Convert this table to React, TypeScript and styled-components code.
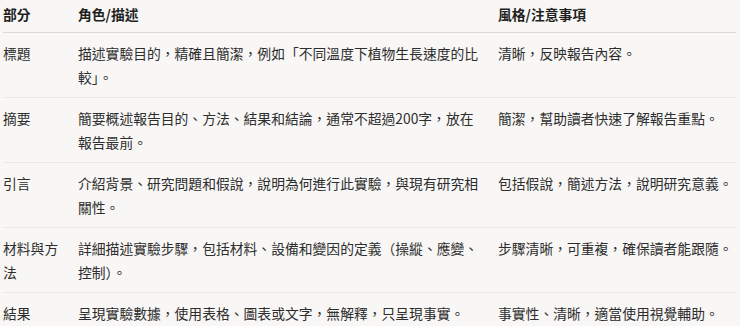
import React from "react";
import styled, { createGlobalStyle } from "styled-components";

const rows = [
  {
    part: "標題",
    role: "描述實驗目的，精確且簡潔，例如「不同溫度下植物生長速度的比較」。",
    note: "清晰，反映報告內容。",
  },
  {
    part: "摘要",
    role: "簡要概述報告目的、方法、結果和結論，通常不超過200字，放在報告最前。",
    note: "簡潔，幫助讀者快速了解報告重點。",
  },
  {
    part: "引言",
    role: "介紹背景、研究問題和假說，說明為何進行此實驗，與現有研究相關性。",
    note: "包括假說，簡述方法，說明研究意義。",
  },
  {
    part: "材料與方法",
    role: "詳細描述實驗步驟，包括材料、設備和變因的定義（操縱、應變、控制）。",
    note: "步驟清晰，可重複，確保讀者能跟隨。",
  },
  {
    part: "結果",
    role: "呈現實驗數據，使用表格、圖表或文字，無解釋，只呈現事實。",
    note: "事實性、清晰，適當使用視覺輔助。",
  },
];

const App: React.FC = () => {
  return (
    <Page lang="zh-Hant-TW">
      <GlobalStyle />
      <Table>
        <colgroup>
          <Col $w={67} />
          <Col $w={420} />
          <Col $w={246} />
        </colgroup>
        <thead>
          <tr>
            <Th>部分</Th>
            <Th>角色/描述</Th>
            <Th>風格/注意事項</Th>
          </tr>
        </thead>
        <tbody>
          {rows.map((r) => (
            <Row key={r.part}>
              <Td>{r.part}</Td>
              <Td>{r.role}</Td>
              <Td>{r.note}</Td>
            </Row>
          ))}
        </tbody>
      </Table>
    </Page>
  );
};

export default App;

const GlobalStyle = createGlobalStyle`
  html, body {
    margin: 0;
    padding: 0;
    background: #f8f7f5;
  }
`;

const Page = styled.div`
  width: 740px;
  height: 326px;
  overflow: hidden;
  padding-left: 3px;
  box-sizing: border-box;
  background: #f8f7f5;
  font-family: "Noto Sans CJK TC", "Noto Sans", sans-serif;
  font-size: 13.8px;
  line-height: 24px;
  color: #2d2d2d;
`;

const Table = styled.table`
  width: 733px;
  table-layout: fixed;
  border-collapse: collapse;
  border-spacing: 0;
`;

const Col = styled.col<{ $w: number }>`
  width: ${(p) => p.$w}px;
`;

const Th = styled.th`
  text-align: left;
  vertical-align: top;
  font-weight: 700;
  color: #1f1f1f;
  padding: 2px 8px 6px;
  border-bottom: 1px solid #d9d9d7;
  &:first-child {
    padding-left: 0;
  }
  &:last-child {
    padding-right: 0;
  }
`;

const Row = styled.tr`
  border-bottom: 1px solid #e9e8e6;
  &:last-child {
    border-bottom: none;
  }
`;

const Td = styled.td`
  vertical-align: top;
  padding: 8px;
  &:first-child {
    padding-left: 0;
  }
  &:last-child {
    padding-right: 0;
  }
`;
